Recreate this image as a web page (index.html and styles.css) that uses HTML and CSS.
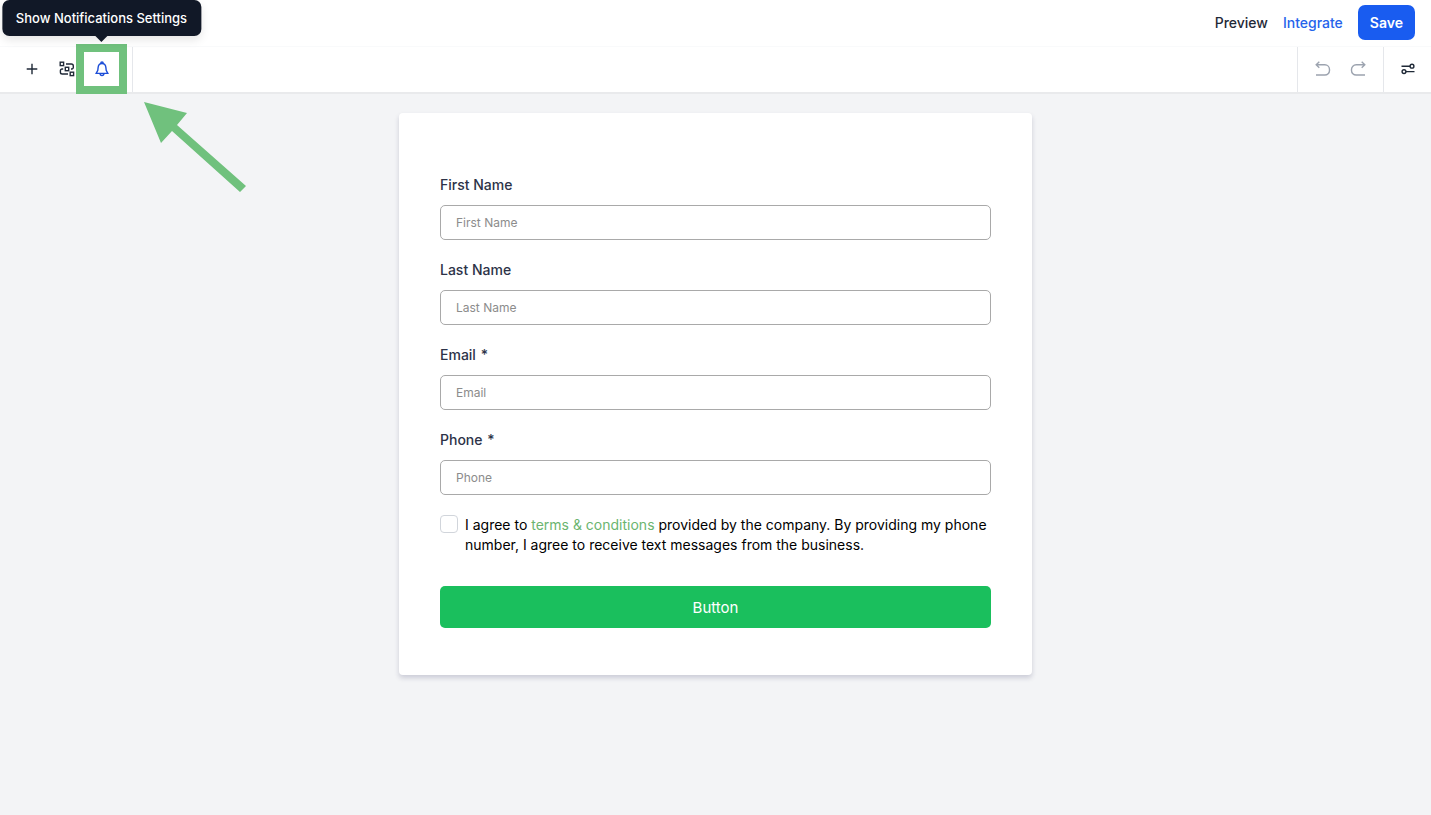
FILE: index.html
```html
<!DOCTYPE html>
<html lang="en">
<head>
  <meta charset="UTF-8">
  <meta name="viewport" content="width=device-width, initial-scale=1.0">
  <title>Form Builder</title>
  <link rel="stylesheet" href="styles.css">
</head>
<body>
<header class="topbar">
  <button type="button" class="text-btn">Preview</button>
  <button type="button" class="text-btn blue">Integrate</button>
  <button type="button" class="save-btn">Save</button>
</header>

<div class="toolbar">
  <div class="tools">
    <button type="button" class="icon-btn" aria-label="Add element">
      <svg width="16" height="16" viewBox="0 0 16 16"><path d="M8 2.7v10.6M2.7 8h10.6"/></svg>
    </button>
    <button type="button" class="icon-btn" aria-label="Fields">
      <svg width="16" height="16" viewBox="0 0 16 16">
        <rect x="1.2" y="1.2" width="3.4" height="3.4"/>
        <rect x="6.3" y="6.3" width="3.4" height="3.4"/>
        <rect x="11.2" y="11.2" width="3.4" height="3.4"/>
        <path d="M7 3h5.3a2 2 0 0 1 2 2v1.5a1.5 1.5 0 0 1-1.5 1.5H12M4.2 8H3a1.6 1.6 0 0 0-1.6 1.6v1.6A1.8 1.8 0 0 0 3.2 13H9"/>
      </svg>
    </button>
    <div class="highlight">
      <button type="button" class="icon-btn active" aria-describedby="tip" aria-label="Notifications">
        <svg width="16" height="16" viewBox="0 0 16 16">
          <path d="M8 2.5C5.8 2.5 4.3 4.2 4.1 6.6L3.8 9.4 2.2 12.4h11.6L12.2 9.4 11.9 6.6C11.7 4.2 10.2 2.5 8 2.5z"/>
          <path d="M6.8 2.6V2.2a1.2 1.2 0 0 1 2.4 0v.4M6.1 12.6a1.9 1.9 0 0 0 3.8 0"/>
        </svg>
      </button>
      <div class="tooltip" id="tip" role="tooltip">Show Notifications Settings</div>
      <svg class="pointer" width="104" height="92" viewBox="0 0 104 92"><path d="M0 0L43 11L33 23L102 84L96 90L28 29L17 41z"/></svg>
    </div>
  </div>
  <div class="history">
    <button type="button" class="icon-btn muted" aria-label="Undo">
      <svg width="16" height="16" viewBox="0 0 16 16"><path d="M4.3 .8L1.2 3.8l3.1 3M1.4 3.8h8.5a4.6 4.6 0 0 1 4.6 4.6v1a4.6 4.6 0 0 1-4.6 4.6H1"/></svg>
    </button>
    <button type="button" class="icon-btn muted" aria-label="Redo">
      <svg width="16" height="16" viewBox="0 0 16 16"><path d="M11.7 .8l3.1 3-3.1 3M14.6 3.8H6.1a4.6 4.6 0 0 0-4.6 4.6v1A4.6 4.6 0 0 0 6.1 14H15"/></svg>
    </button>
  </div>
  <div class="options">
    <button type="button" class="icon-btn" aria-label="Settings">
      <svg width="16" height="16" viewBox="0 0 16 16"><path d="M1.5 5.2h8.6M5.9 10.6h8.6"/><circle cx="12" cy="5.2" r="1.9"/><circle cx="4" cy="10.6" r="1.9"/></svg>
    </button>
  </div>
</div>

<main class="canvas">
  <form class="card">
    <div class="field">
      <label for="first-name">First Name</label>
      <input type="text" id="first-name" placeholder="First Name">
    </div>
    <div class="field">
      <label for="last-name">Last Name</label>
      <input type="text" id="last-name" placeholder="Last Name">
    </div>
    <div class="field">
      <label for="email">Email <span class="required">*</span></label>
      <input type="email" id="email" placeholder="Email">
    </div>
    <div class="field">
      <label for="phone">Phone <span class="required">*</span></label>
      <input type="tel" id="phone" placeholder="Phone">
    </div>
    <div class="terms">
      <input type="checkbox" id="agree">
      <label for="agree">I agree to <a href="#">terms &amp; conditions</a> provided by the company. By providing my phone number, I agree to receive text messages from the business.</label>
    </div>
    <button type="button" class="submit">Button</button>
  </form>
</main>
</body>
</html>
```
FILE: styles.css
```css
* {
  box-sizing: border-box;
}

body {
  margin: 0;
  min-height: 100vh;
  background-color: #f3f4f6;
  color: #1f2937;
  font-family: Inter, "Liberation Sans", sans-serif;
  font-size: 14px;
  line-height: 20px;
}

button,
input {
  font-family: inherit;
  font-size: inherit;
}

button {
  border: 0;
  padding: 0;
  background: none;
  cursor: pointer;
}

.topbar {
  display: flex;
  justify-content: flex-end;
  align-items: center;
  gap: 15px;
  height: 47px;
  padding: 0 16px 1px;
  background-color: white;
  border-bottom: 1px solid #f9fafb;
}

.text-btn {
  color: #1f2937;
  font-weight: 500;
}

.blue {
  color: #2563eb;
}

.save-btn {
  height: 35px;
  padding: 0 12px;
  border-radius: 7px;
  background-color: #195cf0;
  color: white;
  font-weight: 600;
}

.toolbar {
  display: flex;
  height: 47px;
  background-color: white;
  border-bottom: 2px solid #e9eaec;
}

.tools {
  display: flex;
  align-items: center;
  padding: 0 13px 1px 14px;
  border-right: 1px solid #e5e7eb;
}

.icon-btn {
  display: flex;
  align-items: center;
  justify-content: center;
  width: 35px;
  height: 34px;
  color: #1f2937;
}

.icon-btn svg {
  fill: none;
  stroke: currentColor;
  stroke-width: 1.4;
}

.active {
  color: #1d4ed8;
}

.muted {
  color: #9ca3af;
}

.history {
  display: flex;
  align-items: center;
  margin-left: auto;
  padding: 0 8px 1px 7px;
  border-left: 1px solid #e5e7eb;
}

.options {
  display: flex;
  align-items: center;
  padding: 0 6px 1px;
  border-left: 1px solid #e5e7eb;
}

.highlight {
  position: relative;
}

/* green frame around the bell */
.highlight::before {
  content: "";
  position: absolute;
  inset: -8px;
  border: 8px solid #70c17d;
  pointer-events: none;
}

.tooltip {
  position: absolute;
  bottom: 100%;
  left: 50%;
  transform: translateX(-50%);
  margin-bottom: 16px;
  padding: 8px 14px;
  border-radius: 7px;
  background-color: #111827;
  color: white;
  font-size: 13px;
  font-weight: 500;
  white-space: nowrap;
  box-shadow: 0 4px 10px rgba(0, 0, 0, 0.1);
}

.tooltip::after {
  content: "";
  position: absolute;
  top: 100%;
  left: 50%;
  margin-left: -6px;
  border: 6px solid transparent;
  border-top-color: #111827;
  border-bottom: 0;
}

.pointer {
  position: absolute;
  top: 50px;
  left: 60px;
  fill: #70c17d;
  pointer-events: none;
}

.canvas {
  padding: 19px 16px;
}

.card {
  max-width: 633px;
  margin: 0 auto;
  padding: 62px 41px 47px;
  border-radius: 4px;
  background-color: white;
  box-shadow: 0 3px 5px rgba(30, 30, 80, 0.18);
}

.field {
  display: flex;
  flex-direction: column;
  gap: 10px;
  margin-bottom: 20px;
}

.field label {
  color: #2d3348;
  font-weight: 500;
}

.required {
  margin-left: 1px;
}

.field input {
  width: 100%;
  height: 35px;
  padding: 0 15px;
  border: 1px solid #a9a9a9;
  border-radius: 5px;
  background-color: white;
  font-size: 12px;
}

.field input::placeholder {
  color: #8c8c8c;
}

.terms {
  display: flex;
  align-items: flex-start;
  gap: 7px;
  margin-bottom: 31px;
  color: black;
}

.terms input {
  appearance: none;
  flex: none;
  width: 18px;
  height: 18px;
  margin: 0;
  border: 1px solid #d1d5db;
  border-radius: 4px;
}

.terms a {
  color: #6bb56f;
  text-decoration: none;
}

.submit {
  display: block;
  width: 100%;
  height: 42px;
  border-radius: 5px;
  background-color: #1abf5d;
  color: white;
  font-size: 15px;
}
```
